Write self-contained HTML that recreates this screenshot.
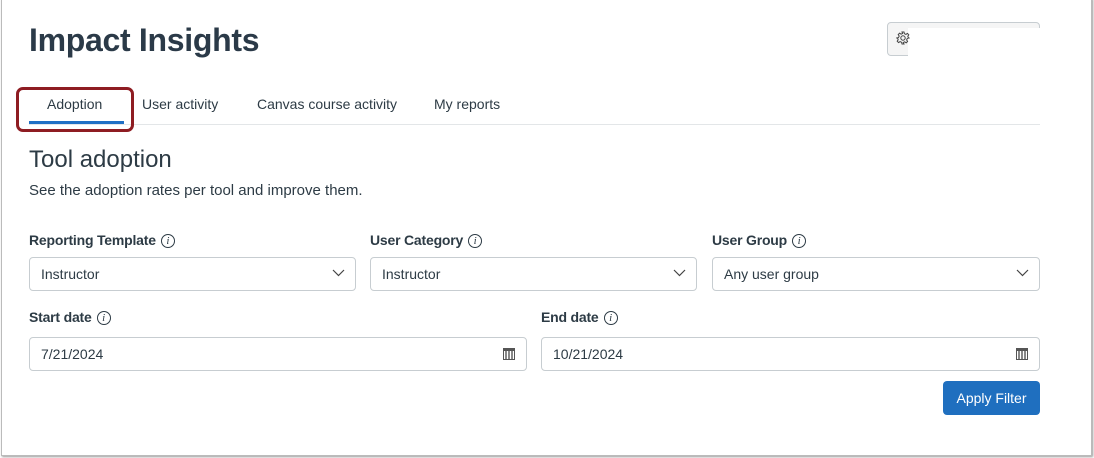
<!DOCTYPE html>
<html><head><style>
*{box-sizing:border-box;margin:0;padding:0}
body{width:1094px;height:458px;background:#fff;font-family:"Liberation Sans",sans-serif;color:#2d3b45;position:relative;overflow:hidden}
.frame{position:absolute;left:1px;top:-2px;width:1091px;height:458px;border:1px solid #bbb;box-shadow:1px 1px 2px #999}
.a{position:absolute;white-space:nowrap}
.box{position:absolute;border:1px solid #c7cdd1;border-radius:4px;height:34px;font-size:14px;padding-left:11px;line-height:32px;color:#2d3b45}
.lbl{position:absolute;font-size:14px;font-weight:bold;color:#2d3b45;letter-spacing:-0.2px}
.i{display:inline-block;width:14px;height:14px;border:1px solid #2d3b45;border-radius:50%;font-size:11px;font-style:italic;text-align:center;line-height:12px;font-weight:normal;margin-left:5px;vertical-align:1px;font-family:"Liberation Serif",serif}
.chev{position:absolute;right:10px;top:11px}
.cal{position:absolute;right:11px;top:10px;width:12px;height:12px;border:1px solid #555;border-top-width:3px;background:repeating-linear-gradient(90deg,#fff 0 1px,#888 1px 3px);}
</style></head><body>
<div class="frame"></div>
<div class="a" style="left:29px;top:22px;font-size:32px;font-weight:bold;color:#2b3a48;letter-spacing:-0.3px">Impact Insights</div>
<div class="a" style="left:887px;top:22px;width:153px;height:34px;border:1px solid #c7cdd1;border-radius:4px;background:#f5f5f5"></div>
<div class="a" style="left:908px;top:28px;width:135px;height:30px;background:#fff"></div>
<svg class="a" style="left:896px;top:31px" width="14" height="14" viewBox="0 0 14 14"><circle cx="7" cy="7" r="2.2" fill="none" stroke="#444" stroke-width="1"/><path d="M6 1h2l.4 1.7 1.5.7 1.5-1 1.4 1.4-1 1.5.7 1.5L13 7v0l-1.7.4-.7 1.5 1 1.5-1.4 1.4-1.5-1-1.5.7L8 13H6l-.4-1.7-1.5-.7-1.5 1-1.4-1.4 1-1.5-.7-1.5L0.8 7l1.7-.4.7-1.5-1-1.5 1.4-1.4 1.5 1 1.5-.7z" fill="none" stroke="#444" stroke-width="1"/></svg>
<div class="a" style="left:29px;top:124px;width:1011px;height:1px;background:#e3e6e8"></div>
<div class="a" style="left:47px;top:96px;font-size:14px">Adoption</div>
<div class="a" style="left:142px;top:96px;font-size:14px">User activity</div>
<div class="a" style="left:257px;top:96px;font-size:14px">Canvas course activity</div>
<div class="a" style="left:434px;top:96px;font-size:14px">My reports</div>
<div class="a" style="left:29px;top:121px;width:95px;height:3px;background:#1f6fc4"></div>
<div class="a" style="left:16px;top:87px;width:118px;height:45px;border:3px solid #8e1c22;border-radius:7px"></div>
<div class="a" style="left:29px;top:146px;font-size:24px;color:#2d3b45">Tool adoption</div>
<div class="a" style="left:29px;top:182px;font-size:15px">See the adoption rates per tool and improve them.</div>
<div class="lbl" style="left:29px;top:232px">Reporting Template<span class="i">i</span></div>
<div class="lbl" style="left:370px;top:232px">User Category<span class="i">i</span></div>
<div class="lbl" style="left:712px;top:232px">User Group<span class="i">i</span></div>
<div class="box" style="left:29px;top:257px;width:327px">Instructor<svg class="chev" width="13" height="8"><path d="M1 1l5.5 5.5L12 1" fill="none" stroke="#444" stroke-width="1.2"/></svg></div>
<div class="box" style="left:370px;top:257px;width:327px">Instructor<svg class="chev" width="13" height="8"><path d="M1 1l5.5 5.5L12 1" fill="none" stroke="#444" stroke-width="1.2"/></svg></div>
<div class="box" style="left:712px;top:257px;width:328px">Any user group<svg class="chev" width="13" height="8"><path d="M1 1l5.5 5.5L12 1" fill="none" stroke="#444" stroke-width="1.2"/></svg></div>
<div class="lbl" style="left:29px;top:309px">Start date<span class="i">i</span></div>
<div class="lbl" style="left:541px;top:309px">End date<span class="i">i</span></div>
<div class="box" style="left:29px;top:337px;width:498px">7/21/2024<span class="cal"></span></div>
<div class="box" style="left:541px;top:337px;width:499px">10/21/2024<span class="cal"></span></div>
<div class="a" style="left:943px;top:381px;width:97px;height:34px;background:#1f6fbf;border-radius:4px;color:#fff;font-size:14px;text-align:center;line-height:34px">Apply Filter</div>
</body></html>
